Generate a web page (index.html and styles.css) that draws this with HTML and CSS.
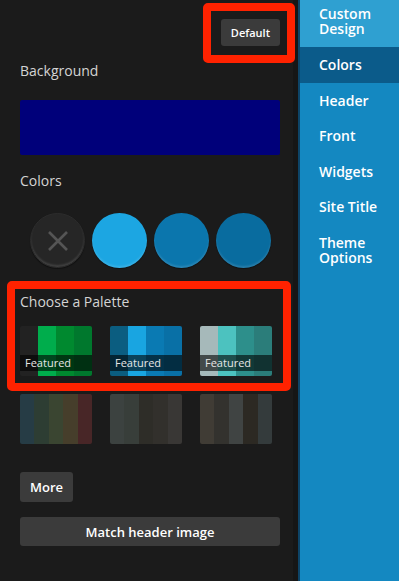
FILE: index.html
```html
<!DOCTYPE html>
<html lang="en">
<head>
  <meta charset="UTF-8">
  <title>Custom Design - Colors</title>
  <link rel="stylesheet" href="styles.css">
</head>
<body>

  <div class="panel">
    <div class="panel-top">
      <button class="btn">Default</button>
    </div>

    <div class="label">Background</div>
    <div class="bg-swatch"></div>

    <div class="label label-colors">Colors</div>
    <div class="circles">
      <div class="circle circle-none">
        <svg width="22" height="22" viewBox="0 0 22 22">
          <path d="M2 2 L20 20 M20 2 L2 20" stroke="#555" stroke-width="2.6" fill="none"/>
        </svg>
      </div>
      <div class="circle c-light"></div>
      <div class="circle c-mid"></div>
      <div class="circle c-dark"></div>
    </div>

    <div class="label label-palette">Choose a Palette</div>
    <div class="palettes">
      <div class="palette">
        <span style="background:#222222"></span>
        <span style="background:#00ad4c"></span>
        <span style="background:#00892f"></span>
        <span style="background:#00782d"></span>
        <div class="tag">Featured</div>
      </div>
      <div class="palette">
        <span style="background:#0b5d80"></span>
        <span style="background:#19a5e1"></span>
        <span style="background:#0a7ab3"></span>
        <span style="background:#0970a6"></span>
        <div class="tag">Featured</div>
      </div>
      <div class="palette">
        <span style="background:#a6b9ba"></span>
        <span style="background:#4cc2bf"></span>
        <span style="background:#2d8f8b"></span>
        <span style="background:#2b7d7a"></span>
        <div class="tag">Featured</div>
      </div>
    </div>

    <div class="palettes palettes-more">
      <div class="palette">
        <span style="background:#263c45"></span>
        <span style="background:#2d3d33"></span>
        <span style="background:#3a4531"></span>
        <span style="background:#463e2b"></span>
        <span style="background:#482627"></span>
      </div>
      <div class="palette">
        <span style="background:#3c4240"></span>
        <span style="background:#383e3a"></span>
        <span style="background:#2e2d28"></span>
        <span style="background:#32302c"></span>
        <span style="background:#393735"></span>
      </div>
      <div class="palette">
        <span style="background:#403c35"></span>
        <span style="background:#33322e"></span>
        <span style="background:#404443"></span>
        <span style="background:#2c2923"></span>
        <span style="background:#343b3c"></span>
      </div>
    </div>

    <button class="btn btn-more">More</button>
    <button class="btn btn-wide">Match header image</button>

    <div class="mark mark-default"></div>
    <div class="mark mark-palette"></div>
  </div>

  <ul class="menu">
    <li class="menu-top">Custom Design</li>
    <li class="active">Colors</li>
    <li>Header</li>
    <li>Front</li>
    <li>Widgets</li>
    <li>Site Title</li>
    <li>Theme Options</li>
  </ul>

</body>
</html>
```

FILE: styles.css
```css
body {
  margin: 0;
  padding: 0;
  font-family: 'Open Sans', 'DejaVu Sans', sans-serif;
  background: #1488c1;
  height: 581px;
  display: flex;
  overflow: hidden;
}

.panel {
  position: relative;
  box-sizing: border-box;
  width: 298px;
  height: 100%;
  padding: 19px 13px 0 20px;
  background: #1b1b1b;
  border-right: 5px solid #161616;
  display: flex;
  flex-direction: column;
  align-items: flex-start;
}

.panel-top {
  align-self: stretch;
  display: flex;
  justify-content: flex-end;
}

.btn {
  font-family: inherit;
  font-weight: 600;
  font-size: 13px;
  color: #fff;
  background: #3b3b3b;
  border: none;
  border-radius: 3px;
  padding: 0 10px;
  height: 30px;
  cursor: pointer;
}

.panel-top .btn {
  font-size: 11px;
  height: 27px;
  padding: 0 10px;
}

.label {
  font-size: 14px;
  line-height: 20px;
  color: #d4d4d4;
  margin-top: 15px;
}

.bg-swatch {
  align-self: stretch;
  height: 55px;
  margin-top: 19px;
  background: #00007a;
  border-radius: 2px;
}

.label-colors {
  margin-top: 16px;
}

.circles {
  display: flex;
  gap: 7px;
  margin-top: 22px;
  padding-left: 10px;
}

.circle {
  width: 55px;
  height: 55px;
  border-radius: 50%;
  box-sizing: border-box;
  display: flex;
  align-items: center;
  justify-content: center;
  box-shadow: inset 0 -2px 2px rgba(255, 255, 255, 0.12), 0 1px 1px rgba(0, 0, 0, 0.4);
}

.circle-none {
  background: #262626;
  border: 1px solid #2c2c2c;
}

.c-light { background: #1ca6e2; }
.c-mid { background: #0b76ad; }
.c-dark { background: #096c9f; }

.label-palette {
  margin-top: 24px;
}

.palettes {
  display: flex;
  gap: 18px;
  margin-top: 14px;
}

.palettes-more {
  margin-top: 18px;
}

.palette {
  position: relative;
  width: 72px;
  height: 50px;
  display: flex;
  border-radius: 2px;
  overflow: hidden;
}

.palette span {
  flex: 1;
}

.tag {
  position: absolute;
  left: 0;
  right: 0;
  bottom: 5px;
  height: 16px;
  line-height: 16px;
  padding-left: 5px;
  font-size: 11px;
  color: #e6e6e6;
  background: rgba(0, 0, 0, 0.6);
}

.btn-more {
  margin-top: 28px;
}

.btn-wide {
  align-self: stretch;
  margin-top: 15px;
  height: 29px;
}

.mark {
  position: absolute;
  box-sizing: border-box;
  border: 8px solid #ff2200;
  border-radius: 5px;
}

.mark-default {
  left: 203px;
  top: 3px;
  width: 92px;
  height: 60px;
}

.mark-palette {
  left: 7px;
  top: 281px;
  width: 284px;
  height: 110px;
}

.menu {
  list-style: none;
  margin: 0;
  padding: 0;
  flex: 1;
  border-left: 2px solid #0d4467;
  background: #1488c1;
}

.menu li {
  font-size: 14px;
  font-weight: 600;
  line-height: 15px;
  color: #fff;
  padding: 10px 8px 10.5px 19px;
}

.menu li.menu-top {
  padding-top: 6px;
  padding-bottom: 11px;
  background: #2fa0d1;
}

.menu li.active {
  background: #0b5b8a;
}
```
